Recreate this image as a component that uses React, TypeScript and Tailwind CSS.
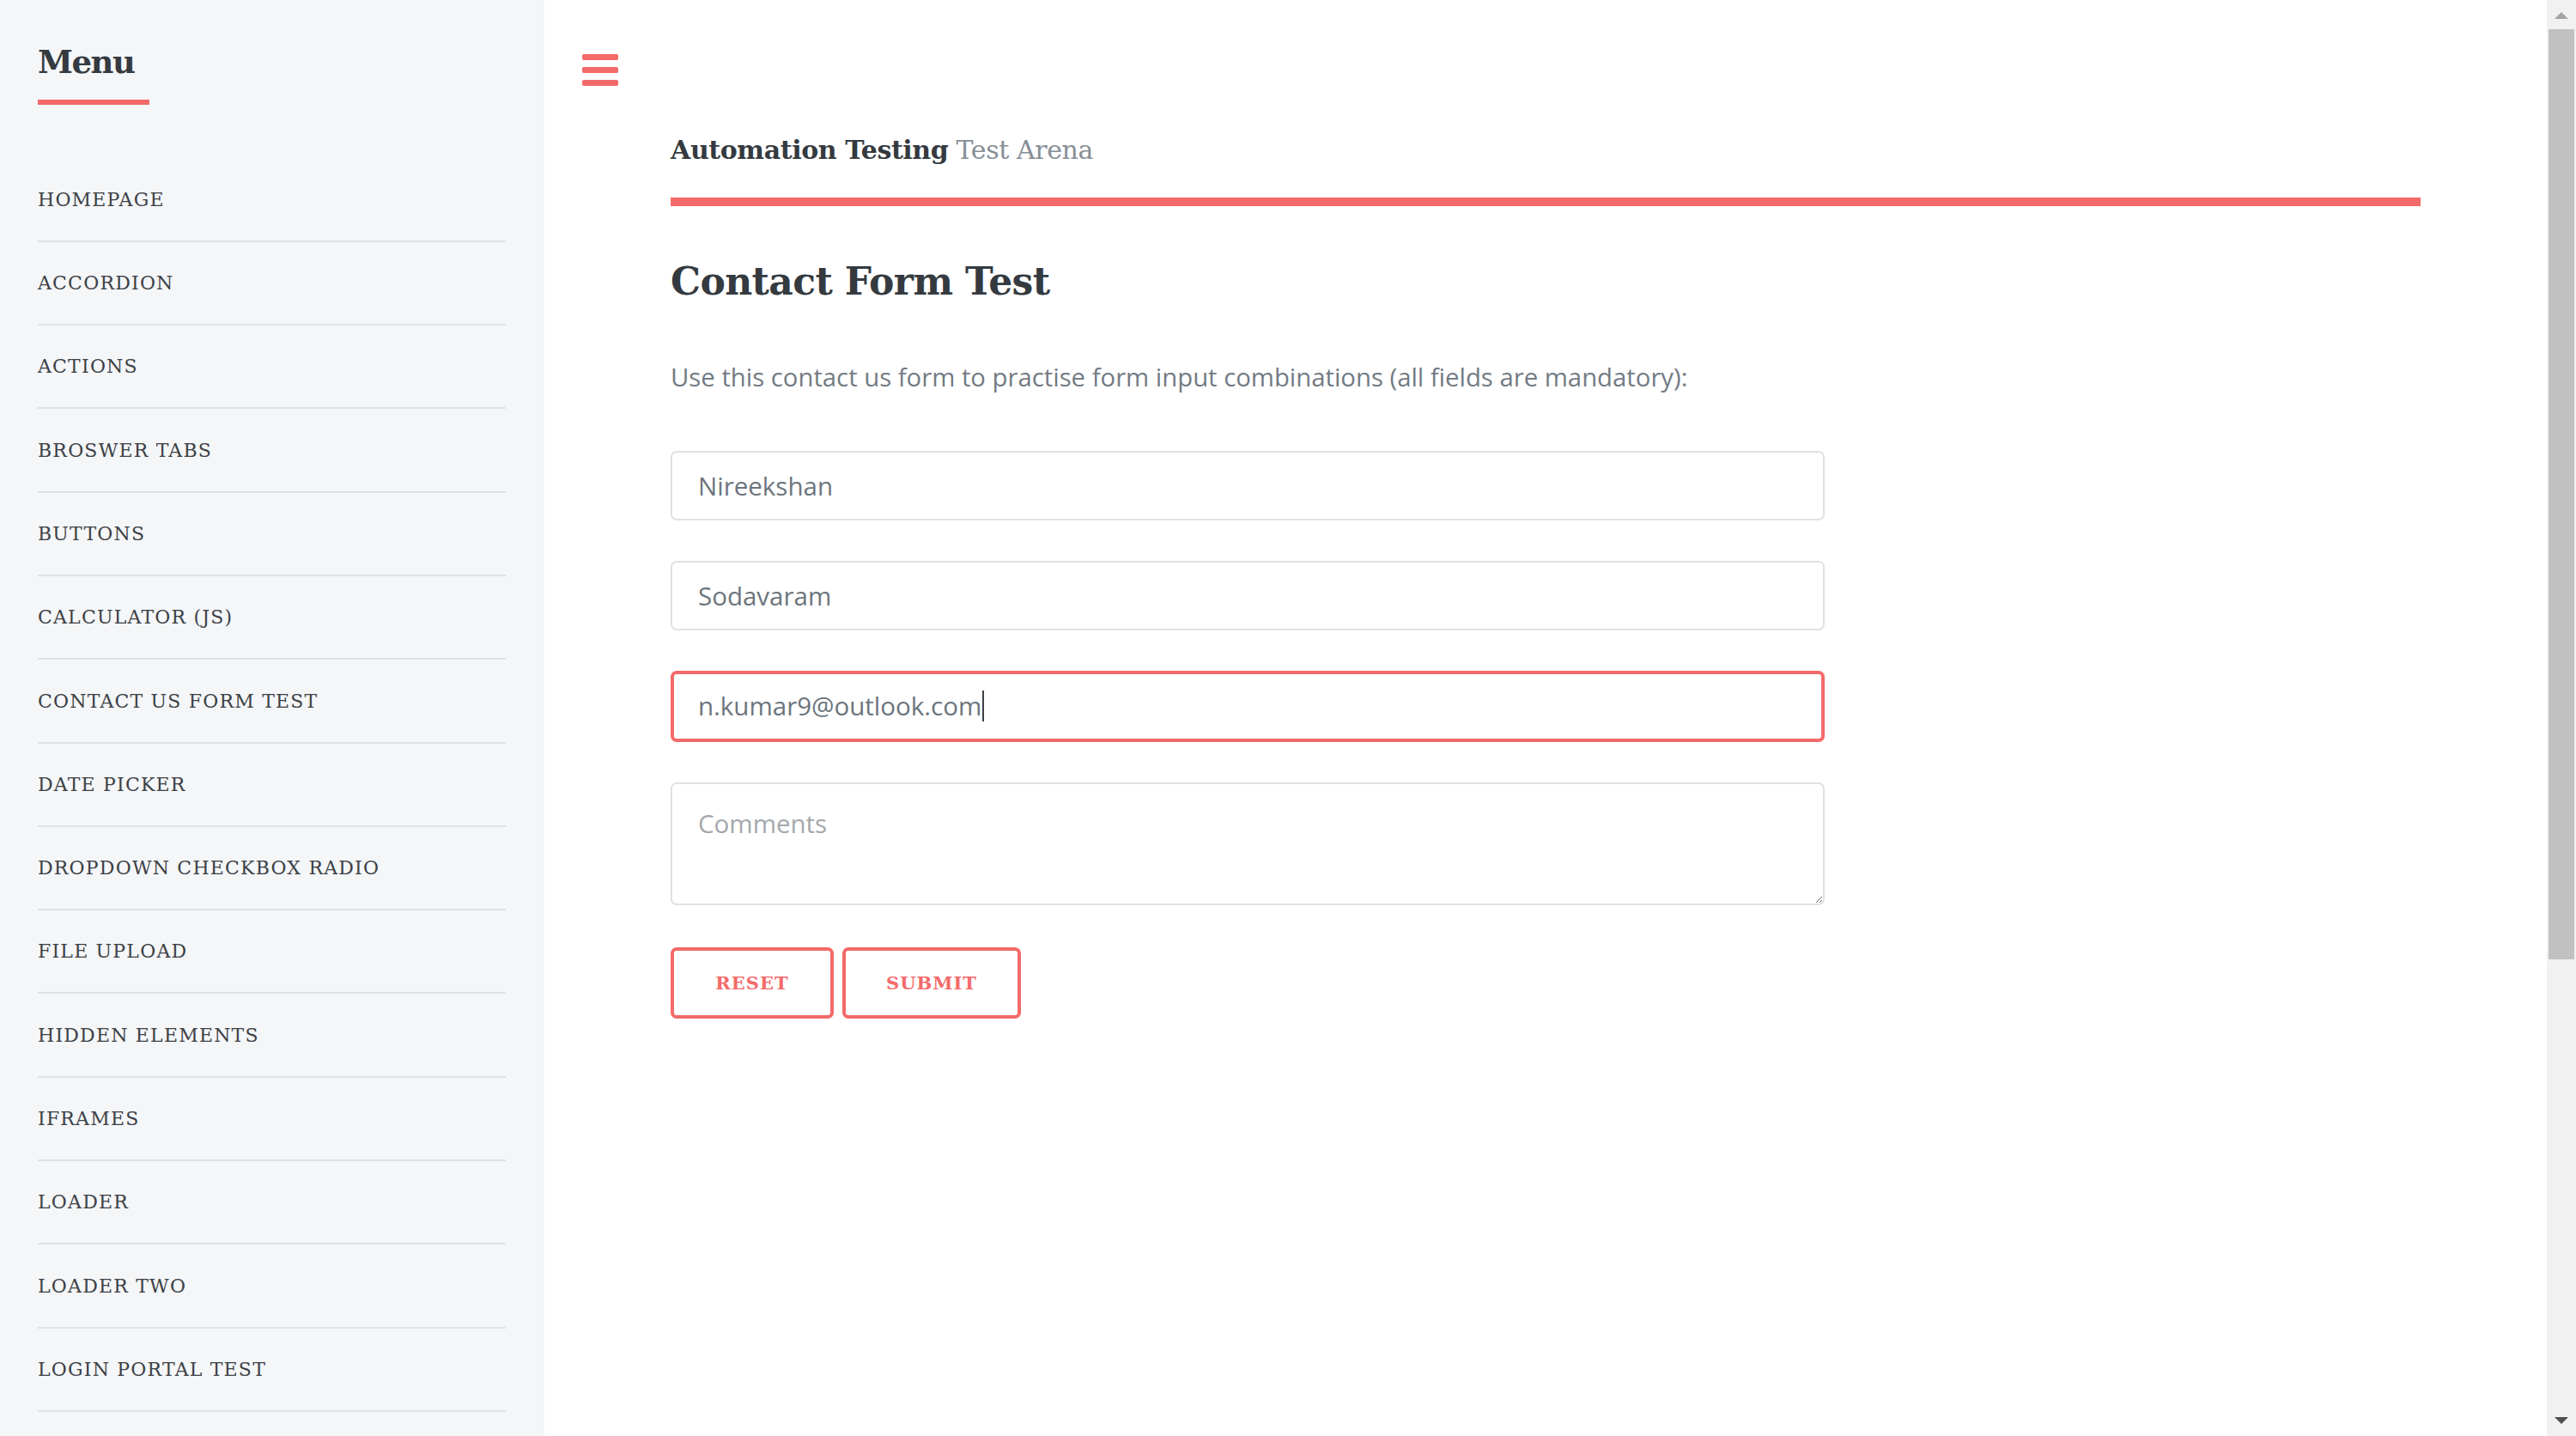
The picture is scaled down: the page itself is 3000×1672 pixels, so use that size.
const menuItems = [
  "HOMEPAGE",
  "ACCORDION",
  "ACTIONS",
  "BROSWER TABS",
  "BUTTONS",
  "CALCULATOR (JS)",
  "CONTACT US FORM TEST",
  "DATE PICKER",
  "DROPDOWN CHECKBOX RADIO",
  "FILE UPLOAD",
  "HIDDEN ELEMENTS",
  "IFRAMES",
  "LOADER",
  "LOADER TWO",
  "LOGIN PORTAL TEST",
];

const slab = "font-['DejaVu_Serif',serif]";
const sans = "font-['Open_Sans',sans-serif]";

export default function App() {
  return (
    <div className="flex w-[3000px] h-[1672px] overflow-hidden bg-white">
      {/* Sidebar */}
      <aside className="w-[634px] shrink-0 bg-[#f4f6f8] pl-[44px] pr-[45px] pt-[54px]">
        <h2 className={`${slab} text-[37px] leading-none font-bold tracking-[-1.5px] text-[#343a40]`}>Menu</h2>
        <div className="mt-[25px] h-[6px] w-[130px] bg-[#f46a6a]" />
        <ul className="mt-[62.5px]">
          {menuItems.map((item) => (
            <li
              key={item}
              className={`${slab} pt-[37.3px] pb-[36px] border-b-2 border-[#dde2e4] text-[22px] leading-none tracking-[1.2px] text-[#3d4146]`}
            >
              {item}
            </li>
          ))}
        </ul>
      </aside>

      {/* Main */}
      <main className="flex-1 pt-[63px]">
        <button className="ml-[44px] flex flex-col gap-[8px]">
          <span className="block h-[7px] w-[42px] rounded-[2px] bg-[#f46a6a]" />
          <span className="block h-[7px] w-[42px] rounded-[2px] bg-[#f46a6a]" />
          <span className="block h-[7px] w-[42px] rounded-[2px] bg-[#f46a6a]" />
        </button>

        <div className="px-[147px]">
          <div className={`${slab} mt-[60px] text-[30px] leading-none tracking-[-0.4px]`}>
            <span className="font-bold text-[#343a40]">Automation Testing</span>{" "}
            <span className="text-[#868e96]">Test Arena</span>
          </div>
          <div className="mt-[40px] h-[10px] bg-[#f46a6a]" />

          <h1 className={`${slab} mt-[66px] text-[44px] leading-none font-bold tracking-[-0.6px] text-[#343a40]`}>
            Contact Form Test
          </h1>
          <p className={`${sans} mt-[75px] text-[29.3px] leading-none text-[#737b84]`}>
            Use this contact us form to practise form input combinations (all fields are mandatory):
          </p>

          <form className={`${sans} mt-[70.5px] w-[1344px] flex flex-col`}>
            <input
              defaultValue="Nireekshan"
              className="h-[81px] rounded-[7px] border-2 border-[#dee2e6] px-[30px] text-[29.5px] text-[#6c757d] outline-none"
            />
            <input
              defaultValue="Sodavaram"
              className="mt-[47px] h-[81px] rounded-[7px] border-2 border-[#dee2e6] px-[30px] text-[29.5px] text-[#6c757d] outline-none"
            />
            <div className="mt-[47px] h-[83px] rounded-[7px] border-4 border-[#f46a6a] px-[28px] flex items-center text-[29.5px] text-[#6c757d]">
              <span>n.kumar9@outlook.com</span>
              <span className="ml-[1px] inline-block h-[36px] w-[2px] bg-[#3d4146]" />
            </div>
            <textarea
              placeholder="Comments"
              className="mt-[47px] h-[143px] rounded-[7px] border-2 border-[#dee2e6] px-[30px] pt-[24px] text-[29.5px] leading-[1.5] text-[#6c757d] placeholder:text-[#a3a8ad] outline-none"
            />
            <div className="mt-[49px] flex gap-[10px]">
              <button
                type="button"
                className={`${slab} h-[83px] w-[190px] rounded-[7px] border-4 border-[#f46a6a] bg-white text-[21px] font-bold tracking-[1px] text-[#f46a6a]`}
              >
                RESET
              </button>
              <button
                type="button"
                className={`${slab} h-[83px] w-[208px] rounded-[7px] border-4 border-[#f46a6a] bg-white text-[21px] font-bold tracking-[1px] text-[#f46a6a]`}
              >
                SUBMIT
              </button>
            </div>
          </form>
        </div>
      </main>

      {/* Scrollbar */}
      <div className="w-[34px] shrink-0 bg-[#f1f1f1] flex flex-col items-center">
        <svg width="16" height="8" viewBox="0 0 16 8" className="mt-[14px]">
          <polygon points="0,8 8,0 16,8" fill="#a3a3a3" />
        </svg>
        <div className="mt-[12px] h-[1083px] w-[30px] bg-[#c1c1c1]" />
        <div className="flex-1" />
        <svg width="16" height="8" viewBox="0 0 16 8" className="mb-[14px]">
          <polygon points="0,0 16,0 8,8" fill="#505050" />
        </svg>
      </div>
    </div>
  );
}
